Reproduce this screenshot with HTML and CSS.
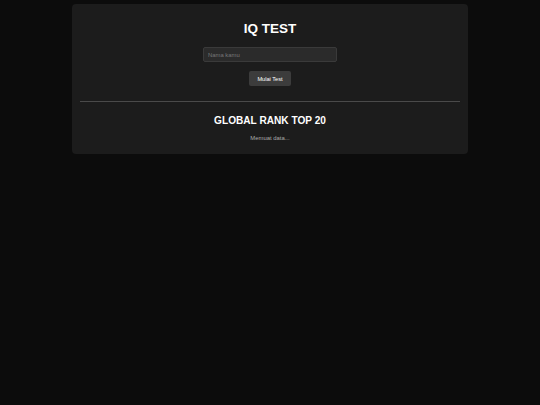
FILE: index.html
```html
<!DOCTYPE html>
<html lang="id">
<head>
<meta charset="utf-8">
<title>IQ Test</title>
<link rel="stylesheet" href="styles.css">
</head>
<body>
<div class="card">
  <h1 class="title">IQ TEST</h1>
  <div class="form">
    <input class="name-input" type="text" placeholder="Nama kamu">
    <button class="start-btn" type="button">Mulai Test</button>
  </div>
  <hr class="divider">
  <h2 class="rank-title">GLOBAL RANK TOP 20</h2>
  <p class="status">Memuat data...</p>
</div>
</body>
</html>
```
FILE: styles.css
```css
html {
  background: #0c0c0c;
}
body {
  margin: 4px 0 0;
  background: #0c0c0c;
  color: #ffffff;
  font-family: "Liberation Sans", Arial, sans-serif;
  text-align: center;
}
.card {
  width: 380px;
  margin: 0 auto;
  padding: 8px;
  background: #1c1c1c;
  border-radius: 4px;
}
.title {
  font-size: 13.5px;
  line-height: 16px;
  margin: 9px 0 10px;
}
.form {
  display: flex;
  flex-direction: column;
  align-items: center;
  gap: 9px;
}
.name-input {
  box-sizing: border-box;
  width: 134px;
  height: 15px;
  padding: 0 4px;
  font-size: 5.9px;
  font-family: "Liberation Sans", Arial, sans-serif;
  background: #2b2b2b;
  border: 1px solid #3a3a3a;
  border-radius: 2px;
  color: #fff;
  outline: none;
}
.name-input::placeholder {
  color: #777;
}
.start-btn {
  box-sizing: border-box;
  width: 42px;
  height: 15px;
  padding: 0;
  font-size: 5.625px;
  font-family: "Liberation Sans", Arial, sans-serif;
  background: #3c3c3c;
  color: #fff;
  border: none;
  border-radius: 2px;
}
.divider {
  margin: 15px 0 0;
  border: none;
  border-top: 1px solid #4a4a4a;
}
.rank-title {
  font-size: 10.125px;
  line-height: 12px;
  margin: 13px 0 0;
}
.status {
  font-size: 5.9px;
  line-height: 7px;
  color: #aaaaaa;
  margin: 8px 0 4px;
}
```
